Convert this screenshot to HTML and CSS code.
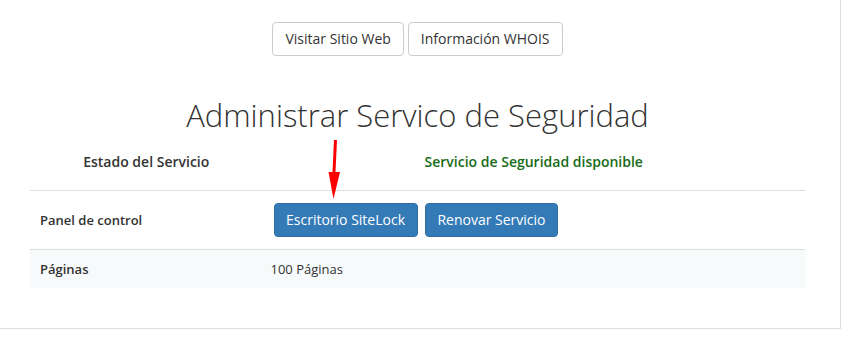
FILE: index.html
```html
<!DOCTYPE html>
<html lang="es">
<head>
  <meta charset="UTF-8">
  <meta name="viewport" content="width=device-width, initial-scale=1.0">
  <title>Administrar Servicio de Seguridad</title>
  <link rel="stylesheet" href="styles.css">
</head>
<body>
  <div class="panel">
    <div class="top-actions">
      <button type="button" class="btn btn-default">Visitar Sitio Web</button>
      <button type="button" class="btn btn-default">Información WHOIS</button>
    </div>

    <h2 class="title">Administrar Servico de Seguridad</h2>

    <table class="service-table">
      <thead>
        <tr>
          <th class="col-label">Estado del Servicio</th>
          <th class="status-ok">Servicio de Seguridad disponible</th>
        </tr>
      </thead>
      <tbody>
        <tr>
          <td class="row-label">Panel de control</td>
          <td class="actions-cell">
            <button type="button" class="btn btn-primary">Escritorio SiteLock</button>
            <button type="button" class="btn btn-primary">Renovar Servicio</button>
          </td>
        </tr>
        <tr class="striped">
          <td class="row-label">Páginas</td>
          <td>100 Páginas</td>
        </tr>
      </tbody>
    </table>
  </div>

  <!-- flecha roja de anotación -->
  <svg class="annotation" width="866" height="353" viewBox="0 0 866 353">
    <line x1="335.5" y1="140" x2="333.8" y2="176" stroke="#f00" stroke-width="3"/>
    <polygon points="328.5,172 340,172 333.5,199" fill="#f00"/>
  </svg>
</body>
</html>
```

FILE: styles.css
```css
body {
  margin: 0;
  font-family: "Open Sans", Arial, sans-serif;
  font-size: 13px;
  color: #333;
  background-color: #fff;
  position: relative;
  overflow: hidden;
}
.panel {
  width: 775px;
  margin-left: -5px;
  padding: 22px 35px 40px;
  border-right: 1px solid #ddd;
  border-bottom: 1px solid #ddd;
}
.top-actions {
  display: flex;
  justify-content: center;
  gap: 4px;
}
.btn {
  font-family: "Open Sans", Arial, sans-serif;
  font-size: 14px;
  line-height: 20px;
  padding: 6px 12px;
  border-radius: 4px;
  border: 1px solid transparent;
  cursor: pointer;
}
.btn-default {
  background-color: #fff;
  border-color: #ccc;
  color: #333;
}
.btn-primary {
  background-color: #337ab7;
  border-color: #2e6da4;
  color: #fff;
  padding: 6px 11.5px;
  margin-left: 3px;
  margin-right: 1px;
}
.title {
  margin: 41px 0 13px;
  text-align: center;
  font-size: 31px;
  line-height: 36px;
  font-weight: 300;
  color: #333;
}
.service-table {
  width: 100%;
  border-collapse: collapse;
}
.service-table th {
  padding: 6px 8px 18px;
  font-size: 14px;
  line-height: 20px;
  font-weight: 600;
  text-align: center;
  border-bottom: 1px solid #ddd;
}
.col-label {
  width: 30%;
}
.status-ok {
  color: #166b16;
}
.service-table td {
  padding: 10px 8px;
  line-height: 18px;
  border-bottom: 1px solid #ddd;
}
.service-table .actions-cell {
  padding: 12px 8px;
}
.service-table tr:last-child td {
  border-bottom: none;
}
.service-table .row-label {
  font-weight: 600;
  padding-left: 10px;
}
.striped {
  background-color: #f7fafb;
}
.annotation {
  position: absolute;
  left: 0;
  top: 0;
  pointer-events: none;
}
```
